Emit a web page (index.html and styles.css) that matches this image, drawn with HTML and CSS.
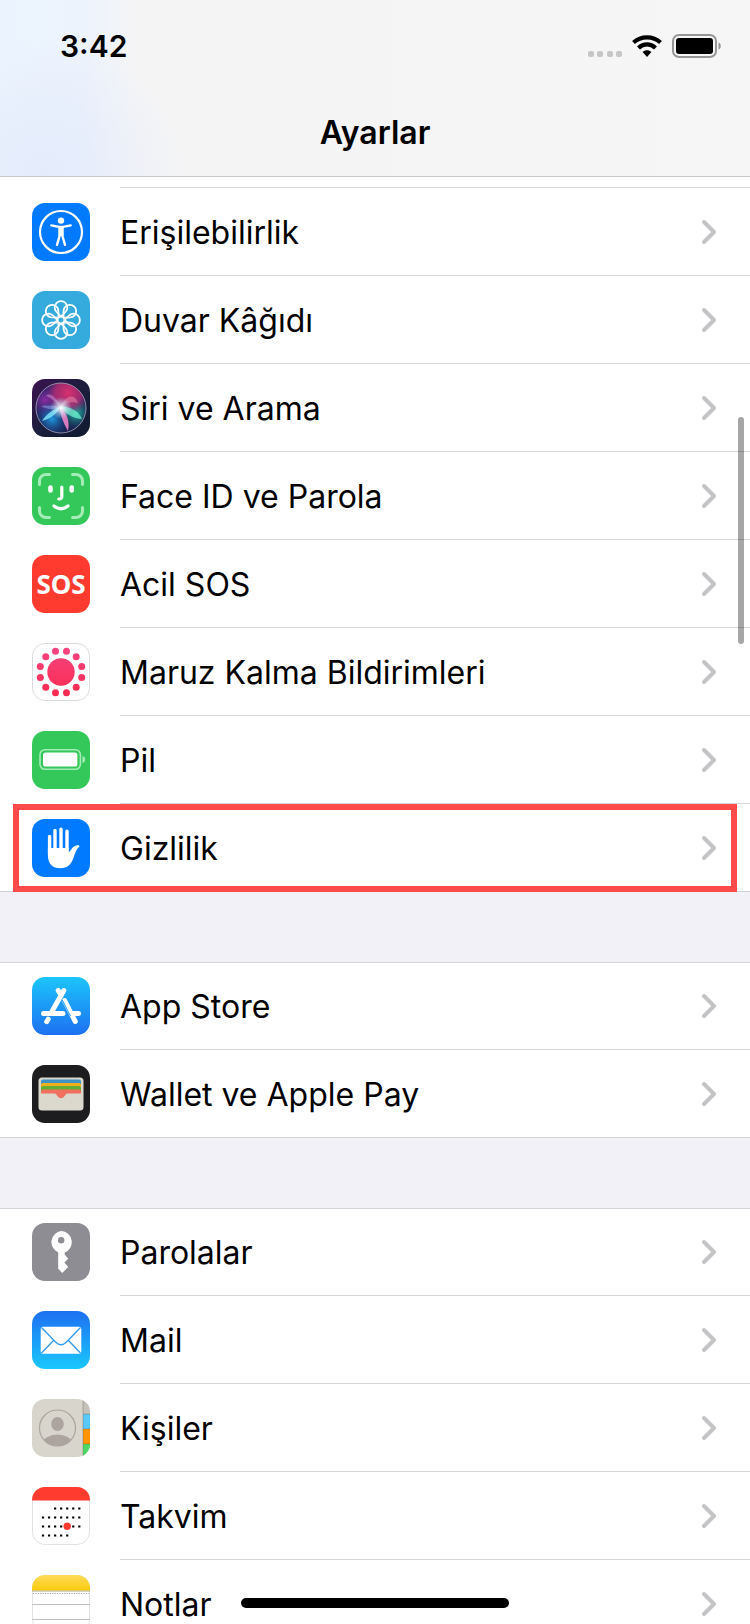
FILE: index.html
```html
<!DOCTYPE html>
<html lang="tr">
<head>
<meta charset="utf-8">
<meta name="viewport" content="width=device-width, initial-scale=1">
<title>Ayarlar</title>
<link rel="stylesheet" href="styles.css">
</head>
<body>
<svg class="defs" aria-hidden="true">
  <defs>
    <symbol id="chevron" viewBox="0 0 16 26"><path d="M3 3l10 10L3 23" fill="none" stroke="#c4c4c6" stroke-width="4" stroke-linecap="round" stroke-linejoin="round"/></symbol>
    <linearGradient id="gStore" x1="0" y1="0" x2="0" y2="1"><stop offset="0" stop-color="#1cc5fb"/><stop offset="1" stop-color="#1d70f2"/></linearGradient>
    <linearGradient id="gMail" x1="0" y1="0" x2="0" y2="1"><stop offset="0" stop-color="#1d70f2"/><stop offset="1" stop-color="#1ac8fc"/></linearGradient>
    <linearGradient id="gNotes" x1="0" y1="0" x2="0" y2="1"><stop offset="0" stop-color="#fddc5c"/><stop offset="1" stop-color="#fccb0a"/></linearGradient>
    <linearGradient id="gExp" gradientUnits="userSpaceOnUse" x1="0" y1="4" x2="0" y2="54"><stop offset="0" stop-color="#f5457f"/><stop offset="1" stop-color="#fc2a50"/></linearGradient>
    <linearGradient id="gSiri" x1="0" y1="0" x2="1" y2="1"><stop offset="0" stop-color="#3c1250"/><stop offset=".5" stop-color="#1b1e3c"/><stop offset="1" stop-color="#101a30"/></linearGradient>
    <radialGradient id="sPink" gradientUnits="userSpaceOnUse" cx="36" cy="14" r="22"><stop offset="0" stop-color="#d8306e"/><stop offset=".6" stop-color="#c22d78" stop-opacity=".75"/><stop offset="1" stop-color="#a0288c" stop-opacity="0"/></radialGradient>
    <radialGradient id="sPurple" gradientUnits="userSpaceOnUse" cx="13" cy="21" r="18"><stop offset="0" stop-color="#8a2da0"/><stop offset="1" stop-color="#6428a0" stop-opacity="0"/></radialGradient>
    <radialGradient id="sBlue" gradientUnits="userSpaceOnUse" cx="20" cy="40" r="18"><stop offset="0" stop-color="#1f97dd"/><stop offset="1" stop-color="#1750a0" stop-opacity="0"/></radialGradient>
    <radialGradient id="sTeal" gradientUnits="userSpaceOnUse" cx="44" cy="34" r="16"><stop offset="0" stop-color="#25b49c"/><stop offset="1" stop-color="#127078" stop-opacity="0"/></radialGradient>
    <radialGradient id="sGlow" gradientUnits="userSpaceOnUse" cx="29" cy="29" r="11"><stop offset="0" stop-color="#fff"/><stop offset=".35" stop-color="#e6f6ff" stop-opacity=".7"/><stop offset="1" stop-color="#b4e6ff" stop-opacity="0"/></radialGradient>
    <clipPath id="tile"><rect width="58" height="58" rx="13"/></clipPath>
  </defs>
</svg>

<header class="header">
  <div class="status">
    <time class="clock">3:42</time>
    <div class="indicators">
      <svg width="36" height="22" viewBox="0 0 36 22" fill="#c6c6c7" aria-hidden="true"><rect x="2" y="16" width="6" height="6" rx="2"/><rect x="11" y="16" width="6" height="6" rx="2"/><rect x="21" y="16" width="6" height="6" rx="2"/><rect x="30" y="16" width="6" height="6" rx="2"/></svg>
      <svg width="30" height="22" viewBox="0 0 30 22" aria-hidden="true"><path d="M1.500 7.500C9 .6 21 .6 28.500 7.500" fill="none" stroke="#000" stroke-width="4.200"/><path d="M6.500 13C11.500 8.200 18.500 8.200 23.500 13" fill="none" stroke="#000" stroke-width="4.200"/><path d="M10.600 17c2.600-2.200 6.200-2.200 8.800 0L15 22z"/></svg>
      <svg width="50" height="24" viewBox="0 0 50 24" aria-hidden="true"><rect x="1" y="1" width="43" height="22" rx="6" fill="none" stroke="#969697" stroke-width="2"/><rect x="4" y="4" width="37" height="16" rx="3"/><path d="M46.500 8.500c3 .8 3 6.200 0 7z" fill="#969697"/></svg>
    </div>
  </div>
  <h1 class="title">Ayarlar</h1>
</header>

<main class="content">
  <ul class="group group-scrolled">
    <li><a class="row" href="#erisilebilirlik">
      <svg class="icon" viewBox="0 0 58 58" aria-hidden="true"><rect width="58" height="58" rx="13" fill="#007aff"/><circle cx="29" cy="29" r="21" fill="none" stroke="#fff" stroke-width="2.200"/><circle cx="29" cy="17.600" r="3.200" fill="#fff"/><path d="M19.300 22.400l7.700 1.500h4l7.700-1.500M27.700 25v7.500L25 41.800M30.300 25v7.500L33 41.800" fill="none" stroke="#fff" stroke-width="2.400" stroke-linecap="round" stroke-linejoin="round"/><path d="M26.500 23.500h5V33h-5z" fill="#fff"/></svg>
      <span class="label">Erişilebilirlik</span><svg class="chevron" aria-hidden="true"><use href="#chevron"/></svg></a></li>
    <li><a class="row" href="#duvar-kagidi">
      <svg class="icon" viewBox="0 0 58 58" aria-hidden="true"><rect width="58" height="58" rx="13" fill="#35aadc"/><defs><path id="petal" d="M0-3.500L-4.800-8.500A6.300 6.300 0 1 1 4.800-8.500z"/></defs><g transform="translate(29 29)" fill="none" stroke="#fff" stroke-width="1.800" stroke-linejoin="round"><use href="#petal"/><use href="#petal" transform="rotate(45)"/><use href="#petal" transform="rotate(90)"/><use href="#petal" transform="rotate(135)"/><use href="#petal" transform="rotate(180)"/><use href="#petal" transform="rotate(225)"/><use href="#petal" transform="rotate(270)"/><use href="#petal" transform="rotate(315)"/><circle r="3.500"/></g></svg>
      <span class="label">Duvar Kâğıdı</span><svg class="chevron" aria-hidden="true"><use href="#chevron"/></svg></a></li>
    <li><a class="row" href="#siri">
      <svg class="icon" viewBox="0 0 58 58" aria-hidden="true"><rect width="58" height="58" rx="13" fill="url(#gSiri)"/><g><circle cx="29" cy="29" r="25" fill="#1b2350"/><circle cx="29" cy="29" r="25" fill="url(#sPurple)"/><circle cx="29" cy="29" r="25" fill="url(#sBlue)"/><circle cx="29" cy="29" r="25" fill="url(#sTeal)"/><circle cx="29" cy="29" r="25" fill="url(#sPink)"/></g><path d="M29 28C24 17 17 13 14 17c4 1 9 6 15 11z" fill="#c88bd4" opacity=".55"/><path d="M29 28C33 16 43 14 46 24c-6-2-12 0-17 4z" fill="#f29bb8" opacity=".45"/><path d="M29 27C22 30 14 35 10 42c8-2 15-7 19-15z" fill="#7be4fa" opacity=".85"/><path d="M28 27c9 0 19 5 22 13-8 0-17-5-22-13z" fill="#6ff0cf" opacity=".75"/><path d="M28 28c0 8 4 17 8 24 2-9-1-19-8-24z" fill="#ee82c8" opacity=".9"/><path d="M9 27c8-1 14 0 20 1-6 3-14 3-20-1z" fill="#9aa4ee" opacity=".5"/><circle cx="29" cy="29" r="11" fill="url(#sGlow)"/><circle cx="29" cy="29" r="25" fill="none" stroke="#a9a3c2" stroke-width="1" opacity=".8"/></svg>
      <span class="label">Siri ve Arama</span><svg class="chevron" aria-hidden="true"><use href="#chevron"/></svg></a></li>
    <li><a class="row" href="#face-id">
      <svg class="icon" viewBox="0 0 58 58" aria-hidden="true"><rect width="58" height="58" rx="13" fill="#34c759"/><g fill="none" stroke-linecap="round"><path d="M7.500 17.500v-3.500a6.500 6.500 0 0 1 6.500-6.500h3.500M40.500 7.500H44a6.500 6.500 0 0 1 6.500 6.500v3.500M50.500 40.500V44a6.500 6.500 0 0 1-6.500 6.500h-3.500M17.500 50.500H14A6.500 6.500 0 0 1 7.500 44v-3.500" stroke="#a6ecb8" stroke-width="3"/><path d="M18.500 20.500v3M39.700 20.500v3" stroke="#fff" stroke-width="4.600"/><path d="M29.800 20v9.500q0 2.500-3 2.500M22 39q7 5.500 14 0" stroke="#fff" stroke-width="3.200"/></g></svg>
      <span class="label">Face ID ve Parola</span><svg class="chevron" aria-hidden="true"><use href="#chevron"/></svg></a></li>
    <li><a class="row" href="#sos">
      <span class="icon icon-sos" aria-hidden="true">SOS</span>
      <span class="label">Acil SOS</span><svg class="chevron" aria-hidden="true"><use href="#chevron"/></svg></a></li>
    <li><a class="row" href="#maruz-kalma">
      <svg class="icon" viewBox="0 0 58 58" aria-hidden="true"><rect x=".5" y=".5" width="57" height="57" rx="12.500" fill="#fff" stroke="#dcdcde"/><g fill="url(#gExp)"><circle cx="29" cy="29" r="13.700"/><circle cx="34.500" cy="8.300" r="3.500"/><circle cx="44.200" cy="13.800" r="3.500"/><circle cx="49.700" cy="23.500" r="3.500"/><circle cx="49.700" cy="34.500" r="3.500"/><circle cx="44.200" cy="44.200" r="3.500"/><circle cx="34.500" cy="49.700" r="3.500"/><circle cx="23.500" cy="49.700" r="3.500"/><circle cx="13.800" cy="44.200" r="3.500"/><circle cx="8.300" cy="34.500" r="3.500"/><circle cx="8.300" cy="23.500" r="3.500"/><circle cx="13.800" cy="13.800" r="3.500"/><circle cx="23.500" cy="8.300" r="3.500"/></g></svg>
      <span class="label">Maruz Kalma Bildirimleri</span><svg class="chevron" aria-hidden="true"><use href="#chevron"/></svg></a></li>
    <li><a class="row" href="#pil">
      <svg class="icon" viewBox="0 0 58 58" aria-hidden="true"><rect width="58" height="58" rx="13" fill="#34c759"/><rect x="8" y="18.700" width="40.400" height="19.600" rx="5" fill="none" stroke="#a6ecb8" stroke-width="1.600"/><rect x="11" y="21.500" width="34.400" height="14" rx="2.600" fill="#fff"/><path d="M50.500 25c3.600.9 3.600 6.100 0 7z" fill="#a6ecb8"/></svg>
      <span class="label">Pil</span><svg class="chevron" aria-hidden="true"><use href="#chevron"/></svg></a></li>
    <li><a class="row row-marked" href="#gizlilik">
      <svg class="icon" viewBox="0 0 58 58" aria-hidden="true"><rect width="58" height="58" rx="13" fill="#007aff"/><path d="M17.600 17.500V35M23 11.500V32M29 10.200V32M35 12.200V32" stroke="#fff" stroke-width="3.400" stroke-linecap="round"/><path d="M15.900 29H36.700v4.500c2.500-2 4-6.500 8.300-7.200 1.500-.2 2.600.2 2.400 1.100-2.600 1.600-3.900 5.600-5.600 10.600-2.500 7.600-6.500 11.300-13.300 11.300-8 0-12.600-4.500-12.600-13z" fill="#fff"/></svg>
      <span class="label">Gizlilik</span><svg class="chevron" aria-hidden="true"><use href="#chevron"/></svg></a></li>
  </ul>

  <ul class="group">
    <li><a class="row" href="#app-store">
      <svg class="icon" viewBox="0 0 58 58" aria-hidden="true"><rect width="58" height="58" rx="13" fill="url(#gStore)"/><g stroke="#fff" stroke-width="5" stroke-linecap="round" fill="none"><path d="M31.800 13.500L20.500 33.500M16.200 42.200l-1.500 2.500M26.200 13.500l3 5M32.500 23.500L43.300 44.500M11.500 36.500H31M41 36.500h5.500"/></g><path d="M30 22.500L38.500 39" stroke="#1b98f7" stroke-width="1"/></svg>
      <span class="label">App Store</span><svg class="chevron" aria-hidden="true"><use href="#chevron"/></svg></a></li>
    <li><a class="row" href="#wallet">
      <svg class="icon" viewBox="0 0 58 58" aria-hidden="true"><rect width="58" height="58" rx="13" fill="#1d1d1f"/><rect x="6.500" y="12.500" width="45" height="33" rx="3.500" fill="#dbd9ce"/><path d="M9 16.500q0-2 2-2h36q2 0 2 2V24H9z" fill="#4094c5"/><path d="M9 20q0-2 2-2h36q2 0 2 2v6H9z" fill="#f3ae1b"/><path d="M9 23q0-2 2-2h36q2 0 2 2v5H9z" fill="#65ae35"/><path d="M9 26.500q0-2 2-2h36q2 0 2 2v2H9z" fill="#f1705f"/><path d="M9 28h13c2.500 0 3.500 5.300 7 5.300S33.500 28 36 28h13z" fill="#f1705f"/></svg>
      <span class="label">Wallet ve Apple Pay</span><svg class="chevron" aria-hidden="true"><use href="#chevron"/></svg></a></li>
  </ul>

  <ul class="group">
    <li><a class="row" href="#parolalar">
      <svg class="icon" viewBox="0 0 58 58" aria-hidden="true"><rect width="58" height="58" rx="13" fill="#8e8d93"/><path fill-rule="evenodd" d="M29.200 8a11.200 11.200 0 0 1 3.500 21.600v2l3.500 4.100-3.800 3.700 3.800 4.600-6 6-4-4.200V29.400A11.200 11.200 0 0 1 29.200 8zm0 6a3.200 3.200 0 1 0 0 6.400 3.200 3.200 0 0 0 0-6.400z" fill="#fff"/></svg>
      <span class="label">Parolalar</span><svg class="chevron" aria-hidden="true"><use href="#chevron"/></svg></a></li>
    <li><a class="row" href="#mail">
      <svg class="icon" viewBox="0 0 58 58" aria-hidden="true"><rect width="58" height="58" rx="13" fill="url(#gMail)"/><rect x="8.700" y="15.700" width="40.600" height="27" rx="2" fill="#fff"/><path d="M9.500 16.500L23.500 31q5.500 5.500 11 0L48.500 16.500M9.500 42L21.500 29.500M48.500 42L36.500 29.500" fill="none" stroke="#2f9bf5" stroke-width="1.300"/></svg>
      <span class="label">Mail</span><svg class="chevron" aria-hidden="true"><use href="#chevron"/></svg></a></li>
    <li><a class="row" href="#kisiler">
      <svg class="icon" viewBox="0 0 58 58" aria-hidden="true"><g clip-path="url(#tile)"><rect width="58" height="58" fill="#d8d5cc"/><path d="M51 0h7v15h-7z" fill="#c5c2b9"/><path d="M51 15h7v15h-7z" fill="#5ac8fa"/><path d="M51 30h7v15h-7z" fill="#ff9500"/><path d="M51 45h7v13h-7z" fill="#4cd964"/><path d="M51 14.500h7v1h-7zM51 29.500h7v1h-7zM51 44.500h7v1h-7zM50.500 0h1v58h-1z" fill="#5a5a50" opacity=".35"/></g><clipPath id="face"><circle cx="25.500" cy="29" r="18"/></clipPath><g clip-path="url(#face)" fill="#aca49f"><ellipse cx="25.500" cy="25" rx="6.300" ry="7"/><ellipse cx="25.500" cy="45" rx="15" ry="9.500"/></g><circle cx="25.500" cy="29" r="18" fill="none" stroke="#aca49f" stroke-width="1.200"/></svg>
      <span class="label">Kişiler</span><svg class="chevron" aria-hidden="true"><use href="#chevron"/></svg></a></li>
    <li><a class="row" href="#takvim">
      <svg class="icon" viewBox="0 0 58 58" aria-hidden="true"><rect x=".5" y=".5" width="57" height="57" rx="12.500" fill="#fff" stroke="#e2e2e4"/><path d="M0 13.500h58V0H0z" fill="#ff3b30" clip-path="url(#tile)"/><g stroke="#000" stroke-width="2.200" stroke-dasharray="2.200 3.850"><path d="M22 21.500h27M9.900 30.500h39M9.900 39.500h39M9.900 48.500h27"/></g><circle cx="35.200" cy="39.200" r="3.700" fill="#ff3b30"/></svg>
      <span class="label">Takvim</span><svg class="chevron" aria-hidden="true"><use href="#chevron"/></svg></a></li>
    <li><a class="row" href="#notlar">
      <svg class="icon" viewBox="0 0 58 58" aria-hidden="true"><rect x=".5" y=".5" width="57" height="57" rx="12.500" fill="#fff" stroke="#e2e2e4"/><path d="M0 0h58v15.500H0z" fill="url(#gNotes)" clip-path="url(#tile)"/><path d="M0 16h58" stroke="#b5a775"/><path d="M1 18.500h56" stroke="#aaa" stroke-dasharray="1.200 1.200"/><path d="M0 29.500h58M0 44.500h58" stroke="#c2c2c4"/></svg>
      <span class="label">Notlar</span><svg class="chevron" aria-hidden="true"><use href="#chevron"/></svg></a></li>
  </ul>
</main>

<div class="scroll-thumb"></div>
<div class="home-indicator"></div>
</body>
</html>
```

FILE: styles.css
```css
* {
  box-sizing: border-box;
}

body {
  margin: 0;
  height: 100vh;
  overflow: hidden;
  display: flex;
  flex-direction: column;
  background: #f2f1f7;
  color: #000;
  font-family: Inter, "Liberation Sans", sans-serif;
}

.defs {
  position: absolute;
  width: 0;
  height: 0;
}

.header {
  flex: none;
  padding-bottom: 21px;
  border-bottom: 1px solid #c6c6c8;
  background:
    radial-gradient(ellipse 140px 130px at 45px 170px, #e4ebfb, transparent),
    linear-gradient(90deg, #ebf4fe 0, #ecf3fd 80px, #f4f4f5 135px, #f6f6f7 100%);
}

.status {
  display: flex;
  justify-content: space-between;
  align-items: center;
  height: 92px;
  padding: 0 28px 0 60px;
}

.clock {
  font-size: 30px;
  font-weight: 600;
}

.indicators {
  display: flex;
  align-items: center;
  gap: 10px;
}

.title {
  margin: 19px 0 0;
  font-size: 32px;
  line-height: 44px;
  font-weight: 600;
  text-align: center;
}

.content {
  flex: 1;
  min-height: 0;
  overflow: hidden;
  display: flex;
  flex-direction: column;
  gap: 70px;
}

.group {
  flex: none;
  margin: 0;
  padding: 0;
  list-style: none;
  background: #fff;
  box-shadow: 0 -1px #d3d2d8 inset, 0 1px #d3d2d8 inset;
}

.group-scrolled {
  box-shadow: 0 -1px #d3d2d8 inset;
}

.group-scrolled::before {
  content: "";
  display: block;
  height: 10px;
  margin-left: 120px;
  border-bottom: 1px solid #d6d6d8;
}

.row {
  position: relative;
  display: flex;
  align-items: center;
  height: 88px;
  padding: 0 33px 0 32px;
  color: inherit;
  text-decoration: none;
}

.group li:not(:last-child) .row::after {
  content: "";
  position: absolute;
  left: 120px;
  right: 0;
  bottom: 0;
  border-bottom: 1px solid #d6d6d8;
}

.row-marked::before {
  content: "";
  position: absolute;
  inset: 0 13px;
  border: 6px solid #ff4b4b;
}

.icon {
  flex: none;
  width: 58px;
  height: 58px;
}

.icon-sos {
  border-radius: 13px;
  background: #ff3b30;
  color: #fff;
  font: bold 26px/58px "Noto Sans", sans-serif;
  text-align: center;
}

.label {
  flex: 1;
  padding: 2px 0 0 30px;
  font-size: 32px;
  line-height: 44px;
}

.chevron {
  flex: none;
  width: 16px;
  height: 26px;
}

.scroll-thumb {
  position: fixed;
  top: 417px;
  right: 6px;
  width: 6px;
  height: 227px;
  border-radius: 3px;
  background: rgba(0, 0, 0, 0.35);
}

.home-indicator {
  position: fixed;
  bottom: 16px;
  left: 50%;
  width: 268px;
  height: 10px;
  margin-left: -134px;
  border-radius: 5px;
  background: #000;
}
```
